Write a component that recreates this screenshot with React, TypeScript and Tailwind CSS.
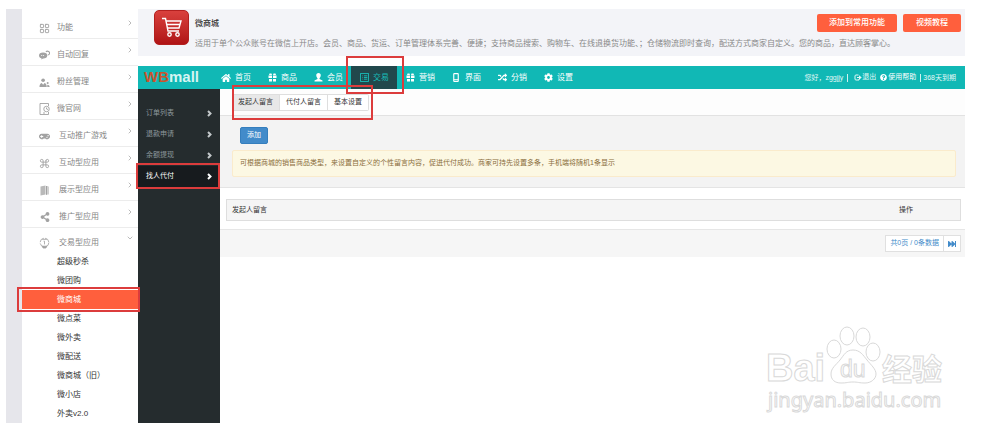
import type { ReactNode } from "react";
import clsx from "clsx";
import { ChevronDown, ChevronRight, LayoutGrid, Command } from "lucide-react";
import {
  FaCog,
  FaFastForward,
  FaGamepad,
  FaHome,
  FaQuestionCircle,
  FaRandom,
  FaShareAlt,
} from "react-icons/fa";

type MenuItem = { label: string; icon: ReactNode; wide?: boolean; open?: boolean };

function ChatIcon() {
  return (
    <svg viewBox="0 0 24 20" width="12" height="10" aria-hidden="true">
      <ellipse cx="9" cy="11" rx="9" ry="6.5" fill="currentColor" />
      <path d="M6 15l-1 5 6-4z" fill="currentColor" />
      <circle cx="6" cy="11" r="1.2" fill="#fff" />
      <circle cx="10" cy="11" r="1.2" fill="#fff" />
      <path d="M15 3c4-3 9 0 8 4-.5 2-2 3-4 3" fill="none" stroke="currentColor" strokeWidth="2.5" />
    </svg>
  );
}

function FansIcon() {
  return (
    <svg viewBox="0 0 24 22" width="12" height="11" fill="currentColor" aria-hidden="true">
      <circle cx="9" cy="6" r="4" />
      <path d="M1 21c0-6 3-9 5-9l3 4 3-4c2 0 5 3 5 9z" />
      <circle cx="19" cy="12" r="2.2" />
      <path d="M18 21v-5c4 0 5 2 5 5z" />
    </svg>
  );
}

function SiteIcon() {
  return (
    <svg viewBox="0 0 22 24" width="11" height="12" fill="none" stroke="currentColor" strokeWidth="1.8" aria-hidden="true">
      <path d="M19 6V1H2v22h17v-5" />
      <circle cx="15" cy="12" r="5.5" />
      <path d="M15 9v3l3 1M8 20h4" />
    </svg>
  );
}

function BookIcon() {
  return (
    <svg viewBox="0 0 18 22" width="9" height="11" fill="currentColor" aria-hidden="true">
      <path d="M1 3l10-2v18L1 21z" opacity=".75" />
      <path d="M12 2h3v17l-3 1zM16 3h1v16h-1z" />
    </svg>
  );
}

function TradeIcon() {
  return (
    <svg viewBox="0 0 24 24" width="11" height="12" fill="none" stroke="currentColor" strokeWidth="1.8" aria-hidden="true">
      <circle cx="12" cy="11" r="9.5" strokeDasharray="12 3" />
      <path d="M10 8h2v7M7 4h10" />
      <path d="M7 19h10l-2 4H9z" fill="currentColor" />
    </svg>
  );
}

function CartIcon() {
  return (
    <svg viewBox="0 0 21 21" width="21" height="21" fill="none" stroke="currentColor" strokeWidth="1.4" aria-hidden="true">
      <path d="M1 1.5h3.5L7 14h11" />
      <path d="M5 4h15l-2 7H6.5M6 7.500h13" />
      <circle cx="8.500" cy="17.500" r="1.700" />
      <circle cx="16.500" cy="17.500" r="1.700" />
    </svg>
  );
}

function GiftIcon() {
  return (
    <svg viewBox="0 0 18 18" width="9" height="9" fill="currentColor" aria-hidden="true">
      <path d="M1 5h7v5H1zM10 5h7v5h-7zM2 12h6v5H2zM10 12h6v5h-6z" />
      <path d="M3 1h4l1 3H2zM11 1h4l1 3h-6z" />
    </svg>
  );
}

function MemberIcon() {
  return (
    <svg viewBox="0 0 18 18" width="9" height="9" fill="currentColor" aria-hidden="true">
      <path d="M9 0c3 0 4.500 2 4.500 4.500S12 9.500 11 10.500v1.500l6 3v2H1v-2l6-3v-1.500c-1-1-2.500-3.500-2.500-6S6 0 9 0z" />
    </svg>
  );
}

function ListIcon() {
  return (
    <svg viewBox="0 0 16 16" width="9" height="9" fill="none" stroke="currentColor" strokeWidth="1.6" aria-hidden="true">
      <rect x="1" y="1" width="14" height="14" />
      <path d="M4 5h1M7 5h6M4 8h1M7 8h6M4 11h1M7 11h6" />
    </svg>
  );
}

function PhoneIcon() {
  return (
    <svg viewBox="0 0 12 16" width="8" height="9" fill="none" stroke="currentColor" strokeWidth="2" aria-hidden="true">
      <rect x="2" y="1" width="8" height="14" rx="1" />
      <path d="M2 12h8" />
    </svg>
  );
}

function LogoutIcon() {
  return (
    <svg viewBox="0 0 16 14" width="8" height="7" fill="none" stroke="currentColor" strokeWidth="2" aria-hidden="true">
      <path d="M9 2H4a2 2 0 0 0-2 2v6a2 2 0 0 0 2 2h6v-2" />
      <path d="M6 7h5" />
      <path d="M10 2.500L15.500 7 10 11.500z" fill="currentColor" stroke="none" />
    </svg>
  );
}

const menu: MenuItem[] = [
  { label: "功能", icon: <LayoutGrid size={11} /> },
  { label: "自动回复", icon: <ChatIcon /> },
  { label: "粉丝管理", icon: <FansIcon /> },
  { label: "微官网", icon: <SiteIcon /> },
  { label: "互动推广游戏", icon: <FaGamepad size={11} />, wide: true },
  { label: "互动型应用", icon: <Command size={11} />, wide: true },
  { label: "展示型应用", icon: <BookIcon />, wide: true },
  { label: "推广型应用", icon: <FaShareAlt size={10} />, wide: true },
  { label: "交易型应用", icon: <TradeIcon />, wide: true, open: true },
];

const apps = ["超级秒杀", "微团购", "微商城", "微点菜", "微外卖", "微配送", "微商城（旧）", "微小店", "外卖v2.0"];

const nav = [
  { label: "首页", icon: <FaHome size={10} /> },
  { label: "商品", icon: <GiftIcon /> },
  { label: "会员", icon: <MemberIcon /> },
  { label: "交易", icon: <ListIcon /> },
  { label: "营销", icon: <GiftIcon /> },
  { label: "界面", icon: <PhoneIcon /> },
  { label: "分销", icon: <FaRandom size={9} /> },
  { label: "设置", icon: <FaCog size={9} /> },
];

const trades = ["订单列表", "退款申请", "余额提现", "找人代付"];
const tabs = ["发起人留言", "代付人留言", "基本设置"];

function Marker({ className }: { className: string }) {
  return <span className={clsx("pointer-events-none absolute z-10 border-2 border-[#dc3c3c]", className)} />;
}

function SideMenu() {
  return (
    <aside className="w-[132px] shrink-0 border-l-[16px] border-[#e6e6eb] bg-white text-[8px] leading-3">
      <ul className="pt-[3px]">
        {menu.map((item) => (
          <li key={item.label}>
            <a
              href="#"
              className={clsx(
                "flex items-center pt-1.5 pr-1 pl-[17px] text-[#858585]",
                item.wide ? "gap-[9px]" : "gap-[7px]",
                item.open ? "h-6" : "h-[27px] border-b border-[#ececec]",
              )}
            >
              <span className="flex w-[11px] shrink-0 justify-center text-[#a2a2a2]">{item.icon}</span>
              <span className="flex-1">{item.label}</span>
              <span className="pb-2.5 text-[#999]">
                {item.open ? <ChevronDown size={8} /> : <ChevronRight size={8} />}
              </span>
            </a>
          </li>
        ))}
      </ul>
      <ul>
        {apps.map((app) => (
          <li key={app} className="relative">
            <a
              href="#"
              className={clsx(
                "flex h-[19px] items-center pl-[35px]",
                app === "微商城" ? "bg-[#ff5f3d] text-white" : "text-[#333]",
              )}
            >
              {app}
            </a>
            {app === "微商城" && <Marker className="-inset-y-[3px] -right-0.5 -left-[5px]" />}
          </li>
        ))}
      </ul>
    </aside>
  );
}

function AppHeader() {
  return (
    <header className="flex h-[47px] items-start gap-1.5 bg-[#f3f4f8] pr-1 pl-4">
      <div className="mt-px flex size-[35px] shrink-0 items-center justify-center rounded-[5px] border border-[#b3201f] bg-linear-to-b from-[#d9403d] to-[#b01315] text-white">
        <CartIcon />
      </div>
      <div className="min-w-0 flex-1 pt-[5px] text-[8px]">
        <div className="flex items-center gap-1.5">
          <h1 className="flex-1 pt-0.5 font-medium text-[#333]">微商城</h1>
          <button type="button" className="h-[18px] rounded-xs bg-[#ff5f3d] px-3 font-medium text-white">
            添加到常用功能
          </button>
          <button type="button" className="h-[18px] rounded-xs bg-[#ff5f3d] px-[13px] font-medium text-white">
            视频教程
          </button>
        </div>
        <p className="mt-1 leading-4 whitespace-nowrap text-[#888]">
          适用于单个公众账号在微信上开店。会员、商品、货运、订单管理体系完善、便捷；支持商品搜索、购物车、在线退换货功能、；仓储物流即时查询，配送方式商家自定义。您的商品，直达顾客掌心。
        </p>
      </div>
    </header>
  );
}

function TopBar() {
  return (
    <div className="flex h-[23px] items-stretch bg-[#11b8b5] pr-[9px] text-white">
      <div className="flex w-[75px] shrink-0 items-center pl-1.5 font-['Liberation_Sans',sans-serif] text-[15px] font-bold">
        <span className="text-[#c8542d]">WB</span>
        <span className="text-[#d5f5f3]">mall</span>
      </div>
      <nav className="flex flex-1">
        {nav.map((item) => {
          const active = item.label === "交易";
          return (
            <a
              key={item.label}
              href="#"
              className={clsx(
                "relative flex items-center gap-1 px-2 text-[8px]",
                active && "bg-[#21484c] text-[#19bdb9]",
              )}
            >
              <span className="flex w-2.5 justify-center">{item.icon}</span>
              {item.label}
              {active && <Marker className="-top-2.5 -right-[7px] -bottom-[5px] -left-[5px]" />}
            </a>
          );
        })}
      </nav>
      <div className="flex items-center text-[7px] text-[#e2f8f7]">
        <span className="border-r border-[#d0f1f0] pr-1 leading-2">您好，zggjjy</span>
        <a href="#" className="ml-1.5 flex items-center">
          <LogoutIcon />
          退出
        </a>
        <a href="#" className="ml-1 flex items-center gap-px text-white">
          <FaQuestionCircle size={7} />
          使用帮助
        </a>
        <span className="ml-1 border-l border-[#d0f1f0] pl-0.5 leading-2">368天到期</span>
      </div>
    </div>
  );
}

function TradeMenu() {
  return (
    <ul className="w-[82px] shrink-0 bg-[#252c2e] pt-[14px] text-[7px]">
      {trades.map((label) => {
        const active = label === "找人代付";
        return (
          <li key={label} className="relative">
            <a
              href="#"
              className={clsx(
                "flex h-[21px] items-center justify-between px-2",
                active ? "bg-[#171b1e] text-white" : "text-[#8d999d]",
              )}
            >
              {label}
              <svg
                viewBox="0 0 10 14"
                width="5"
                height="7"
                fill="none"
                stroke={active ? "#fff" : "#c4c9cb"}
                strokeWidth="4"
                aria-hidden="true"
              >
                <path d="M2 2l5 5-5 5" />
              </svg>
            </a>
            {active && <Marker className="-top-[3px] right-0 -bottom-0.5 -left-0.5" />}
          </li>
        );
      })}
    </ul>
  );
}

function Content() {
  return (
    <main className="min-w-0 flex-1 text-[7px] text-[#333]">
      <div className="flex h-[27px] items-center border-b border-[#e2e2e2] bg-[#fdfdfd] pl-3">
        <div className="relative flex">
          {tabs.map((tab, i) => (
            <button
              key={tab}
              type="button"
              className={clsx(
                "h-[17px] border-y border-r border-[#dedede] px-1.5",
                i === 0 ? "bg-[#e8e8e8]" : "bg-white",
                i === tabs.length - 1 && "rounded-r-xs",
              )}
            >
              {tab}
            </button>
          ))}
          <Marker className="-top-[9px] -right-1 -bottom-[9px] left-0" />
        </div>
      </div>

      <section className="border-b border-[#e4e4e4] bg-[#f3f3f3] pt-[11px] pr-[9px] pb-2.5 pl-3">
        <button
          type="button"
          className="ml-2 block h-[17px] rounded-xs border border-[#357ebd] bg-[#428bca] px-1.5 text-white"
        >
          添加
        </button>
        <p className="mt-1.5 flex h-[27px] items-center rounded-xs border border-[#faebcc] bg-[#fcf8e3] px-[7px] text-[#8a6d3b]">
          可根据商城的销售商品类型，来设置自定义的个性留言内容，促进代付成功。商家可持先设置多条，手机端将随机1条显示
        </p>
      </section>

      <div className="pt-[11px] pr-1 pb-2 pl-1.5">
        <table className="w-full border-separate border-spacing-0 border border-[#dedede] bg-[#f5f5f5]">
          <thead>
            <tr className="h-5">
              <th className="pl-[5px] text-left font-normal">发起人留言</th>
              <th className="w-[108px] text-center font-normal">操作</th>
            </tr>
          </thead>
        </table>
      </div>

      <div className="flex h-7 items-center justify-end border-t border-[#e6e6e6] bg-[#f6f6f6] pr-1">
        <div className="flex h-[17px] items-stretch border border-[#e0e0e0] bg-white text-[#428bca]">
          <span className="flex items-center border-r border-[#e0e0e0] px-1">共0页 / 0条数据</span>
          <button type="button" aria-label="末页" className="flex items-center px-1">
            <FaFastForward size={8} />
          </button>
        </div>
      </div>
    </main>
  );
}

function Watermark() {
  return (
    <svg
      className="pointer-events-none absolute right-5 bottom-2.5 h-[88px] w-[180px]"
      viewBox="0 0 180 88"
      fill="#fff"
      stroke="#d9d9d9"
      strokeWidth="1"
      fontFamily="'Liberation Sans', 'Noto Sans CJK SC', sans-serif"
    >
      <text x="1" y="56" fontSize="38" fontWeight="700">
        Bai
      </text>
      <ellipse cx="69" cy="24" rx="7" ry="9" />
      <ellipse cx="82" cy="11" rx="7" ry="9" />
      <ellipse cx="98" cy="12" rx="7" ry="9" />
      <ellipse cx="108" cy="27" rx="7" ry="9" />
      <path d="M88 25c7 0 10 5 14 10s9 9 9 14-5 9-11 9-7-1-12-1-6 1-12 1-10-3-10-9 5-9 9-14 6-10 13-10z" />
      <text x="75" y="52" fontSize="23" fontWeight="400">
        du
      </text>
      <text x="117" y="55" fontSize="30" fontWeight="700">
        经验
      </text>
      <text x="3" y="82" fontSize="20" fontFamily="'Noto Sans', sans-serif">
        jingyan.baidu.com
      </text>
    </svg>
  );
}

export default function App() {
  return (
    <div className="relative flex bg-white pt-[9px] pr-[35px] pb-2.5 pl-1.5 font-['Liberation_Sans','Noto_Sans_CJK_SC',sans-serif]">
      <SideMenu />
      <div className="relative flex min-w-0 flex-1 flex-col">
        <AppHeader />
        <div className="mt-2.5">
          <TopBar />
        </div>
        <div className="flex flex-1">
          <TradeMenu />
          <Content />
        </div>
        <Watermark />
      </div>
    </div>
  );
}
